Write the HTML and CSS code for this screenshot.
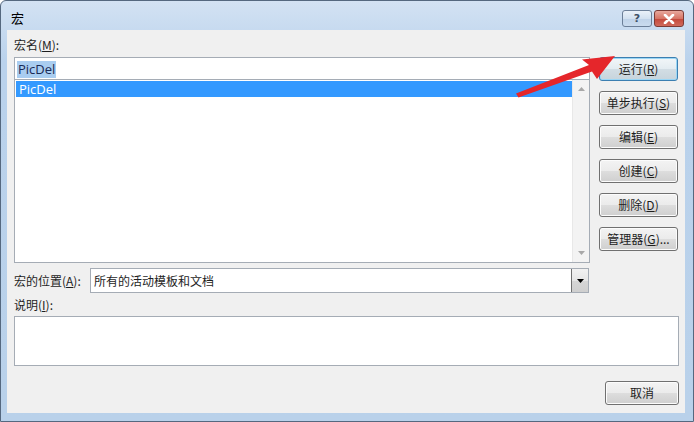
FILE: index.html
```html
<!DOCTYPE html>
<html lang="zh-CN">
<head>
  <meta charset="UTF-8">
  <title>宏</title>
  <link rel="stylesheet" href="styles.css">
</head>
<body>
  <div class="window">
    <div class="titlebar">
      <span class="title">宏</span>
      <div class="caption-btns">
        <span class="cap-btn help">?</span>
        <span class="cap-btn close">
          <svg width="12" height="10" viewBox="0 0 12 10"><path d="M2 1 L10 9 M10 1 L2 9" stroke="#fff" stroke-width="2.6" stroke-linecap="round"/></svg>
        </span>
      </div>
    </div>
    <div class="client">
      <div class="label">宏名(<u>M</u>):</div>
      <div class="main">
        <div class="left">
          <div class="name-input"><span class="sel-text">PicDel</span></div>
          <div class="listbox">
            <div class="items">
              <div class="item selected">PicDel</div>
            </div>
            <div class="vscroll">
              <span class="sb-arrow">
                <svg width="7" height="4" viewBox="0 0 7 4"><path d="M0 4 L3.5 0 L7 4 Z" fill="#a8a8a8"/></svg>
              </span>
              <span class="sb-arrow">
                <svg width="7" height="4" viewBox="0 0 7 4"><path d="M0 0 L3.5 4 L7 0 Z" fill="#a8a8a8"/></svg>
              </span>
            </div>
          </div>
        </div>
        <div class="buttons">
          <button class="btn default">运行(<u>R</u>)</button>
          <button class="btn">单步执行(<u>S</u>)</button>
          <button class="btn">编辑(<u>E</u>)</button>
          <button class="btn">创建(<u>C</u>)</button>
          <button class="btn">删除(<u>D</u>)</button>
          <button class="btn">管理器(<u>G</u>)...</button>
        </div>
      </div>
      <div class="location">
        <span class="loc-label">宏的位置(<u>A</u>):</span>
        <div class="combo">
          <span class="combo-text">所有的活动模板和文档</span>
          <span class="combo-btn">
            <svg width="7" height="4" viewBox="0 0 7 4"><path d="M0 0 L3.5 4 L7 0 Z" fill="#000"/></svg>
          </span>
        </div>
      </div>
      <div class="label desc-label">说明(<u>I</u>):</div>
      <div class="desc"></div>
      <div class="footer">
        <button class="btn cancel">取消</button>
      </div>
    </div>
    <svg class="arrow" width="694" height="422" viewBox="0 0 694 422">
      <path d="M516 93.5 L589 65 L582 59.5 L615 56 L597 79 L592 71.5 L518.5 97.5 Z" fill="#e5262b"/>
    </svg>
  </div>
</body>
</html>
```

FILE: styles.css
```css
* {
  box-sizing: border-box;
}
body {
  margin: 0;
  font-family: "Noto Sans CJK SC", "Noto Sans", sans-serif;
  font-size: 12px;
  color: #1e1e1e;
}
.window {
  position: relative;
  width: 694px;
  height: 422px;
  border: 1px solid #55687f;
  border-radius: 6px 6px 0 0;
  background: linear-gradient(#d3e2f3, #bad2ec 60px, #b9d1ea);
  padding: 0 8px 8px 6px;
  display: flex;
  flex-direction: column;
}
.titlebar {
  height: 29px;
  display: flex;
  align-items: center;
  padding-left: 4px;
}
.title {
  font-size: 13px;
  color: #000;
  margin-top: 4px;
}
.caption-btns {
  margin-left: auto;
  display: flex;
  gap: 2px;
  margin-top: 6px;
  margin-right: 1px;
}
.cap-btn {
  width: 30px;
  height: 17px;
  border: 1px solid #6c7f98;
  border-radius: 3px;
  display: flex;
  align-items: center;
  justify-content: center;
}
.help {
  background: linear-gradient(#eaf1f9, #d3e1f0 50%, #bfd2e8 51%, #cadbee);
  color: #3d4f66;
  font-family: "DejaVu Sans", sans-serif;
  font-size: 11px;
  font-weight: bold;
}
.close {
  border-color: #7b3a35;
  background: linear-gradient(#e8a89d, #d77566 50%, #c4473a 51%, #d06a5c);
}
.client {
  flex: 1;
  background: #f0f0f0;
  padding: 7px 6px 0 7px;
  display: flex;
  flex-direction: column;
}
.label {
  line-height: 16px;
  height: 16px;
}
.main {
  display: flex;
  margin-top: 4px;
}
.left {
  width: 576px;
  display: flex;
  flex-direction: column;
}
.name-input {
  height: 23px;
  border: 1px solid #a5acb5;
  background: #fff;
  padding: 2px 2px 0 2px;
}
.sel-text {
  display: inline-block;
  background: #a9cdf0;
  color: #1a2a56;
  font-family: "Open Sans", sans-serif;
  font-size: 13px;
  line-height: 17px;
  padding: 0 1px;
}
.listbox {
  height: 183px;
  border: 1px solid #a5acb5;
  border-top: none;
  background: #fff;
  display: flex;
}
.items {
  flex: 1;
  padding: 1px 0 0 1px;
}
.item {
  height: 16px;
  line-height: 16px;
  padding-left: 3px;
  font-family: "Open Sans", sans-serif;
  font-size: 13px;
}
.item.selected {
  background: #3399ff;
  color: #fff;
}
.vscroll {
  width: 17px;
  background: #f3f3f3;
  border-left: 1px solid #e8e8e8;
  display: flex;
  flex-direction: column;
  justify-content: space-between;
  padding: 7px 0;
  align-items: center;
}
.sb-arrow {
  display: flex;
}
.buttons {
  width: 79px;
  margin-left: 9px;
  display: flex;
  flex-direction: column;
  gap: 10px;
}
.btn {
  height: 24px;
  width: 79px;
  padding: 0;
  border: 1px solid #707070;
  border-radius: 3px;
  background: linear-gradient(#f3f3f3, #ebebeb 50%, #dddddd 51%, #cfcfcf);
  box-shadow: inset 0 0 0 1px #fcfcfc;
  font-family: "Noto Sans CJK SC", "Noto Sans", sans-serif;
  font-size: 12px;
  color: #1e1e1e;
  line-height: 20px;
}
.btn.default {
  border-color: #3c7fb1;
  background: linear-gradient(#eaf6fd, #d9f0fc 50%, #bee6fd 51%, #a7d9f5);
  box-shadow: inset 0 0 0 1px #9ad6f5;
  background: linear-gradient(#f2f6f8, #e3ecf1 50%, #d2dde4 51%, #c7d4dc);
}
.location {
  display: flex;
  align-items: center;
  margin-top: 5px;
  height: 25px;
}
.loc-label {
  width: 76px;
}
.combo {
  width: 499px;
  height: 25px;
  border: 1px solid #a5acb5;
  background: #fff;
  display: flex;
  align-items: center;
}
.combo-text {
  flex: 1;
  padding-left: 3px;
  line-height: 22px;
}
.combo-btn {
  width: 17px;
  height: 23px;
  border-left: 1px solid #707070;
  background: linear-gradient(#f2f2f2, #e6e6e6 50%, #d6d6d6 51%, #cfcfcf);
  display: flex;
  align-items: center;
  justify-content: center;
}
.desc-label {
  margin-top: 4px;
}
.desc {
  height: 50px;
  margin-top: 3px;
  border: 1px solid #a5acb5;
  background: #fff;
}
.footer {
  display: flex;
  justify-content: flex-end;
  margin-top: 15px;
}
.btn.cancel {
  width: 74px;
}
.arrow {
  position: absolute;
  left: -1px;
  top: -1px;
  pointer-events: none;
}
```
